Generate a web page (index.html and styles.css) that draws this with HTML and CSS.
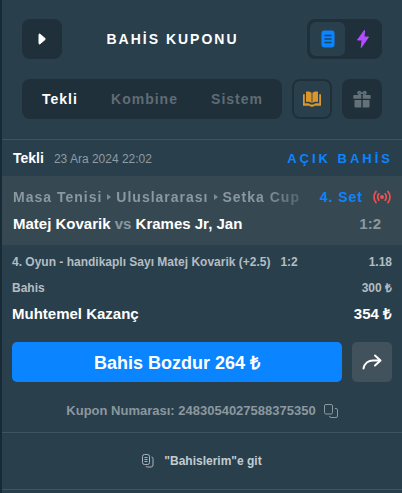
FILE: index.html
```html
<!DOCTYPE html>
<html lang="tr">
<head>
    <meta charset="UTF-8">
    <meta name="viewport" content="width=device-width, initial-scale=1.0">
    <title>Bahis Kuponu</title>
    <link rel="stylesheet" href="styles.css">
</head>
<body>
    <div class="kupon">
        <div class="ust">
            <div class="baslik">
                <button class="kare" type="button" aria-label="Kapat">
                    <svg width="8" height="12" viewBox="0 0 8 12"><path d="M1 1.600v8.800c0 .6.5.8 1 .4l5-4.200c.4-.3.4-.9 0-1.200L2 1.200C1.500.8 1 1 1 1.600z" fill="#fff" stroke="#fff"/></svg>
                </button>
                <h1>BAHİS KUPONU</h1>
                <div class="gecis">
                    <button class="secili" type="button" aria-label="Kupon">
                        <svg width="14" height="18" viewBox="0 0 14 18"><rect x=".5" y=".5" width="13" height="17" rx="3" fill="#0a84ff"/><path d="M4 5.500h6M4 9h6M4 12.500h6" stroke="#20435f" stroke-width="1.500" stroke-linecap="round"/></svg>
                    </button>
                    <button type="button" aria-label="Hızlı bahis">
                        <svg width="14" height="20" viewBox="0 0 14 20"><path d="M8.500 1.300L1.500 11h4.600L5.200 18.500 12.500 8H8z" fill="#b34dff" stroke="#b34dff" stroke-linejoin="round"/></svg>
                    </button>
                </div>
            </div>
            <div class="menu">
                <div class="sekmeler">
                    <button class="aktif" type="button">Tekli</button>
                    <button type="button">Kombine</button>
                    <button type="button">Sistem</button>
                </div>
                <button class="kare cerceve" type="button" aria-label="Kitap">
                    <svg width="18" height="16" viewBox="0 0 18 16"><path d="M3 .8c2.300-.5 4.200 0 5.600 1.200v10.200C7.200 11 5.300 10.600 3 11zM15 .8c-2.300-.5-4.200 0-5.600 1.200v10.200c1.400-1.200 3.300-1.600 5.600-1.200zM0 3.200h1.800v9.200c2.600-.5 4.500 0 6 1h2.400c1.500-1 3.400-1.500 6-1V3.200H18V14.800h-6.500c-.5.700-1.200 1-2.500 1s-2-.3-2.500-1H0z" fill="#d9962c"/></svg>
                </button>
                <button class="kare" type="button" aria-label="Hediye">
                    <svg width="18" height="18" viewBox="0 0 18 18"><path d="M1.200 5H8.300V8.800H.3V6Q.3 5 1.200 5zM9.700 5h7.100q.9 0 .9 1v2.800h-8zM1.500 10h6.800v7.500H2.500q-1 0-1-1zM9.700 10h6.800v6.500q0 1-1 1H9.700z" fill="#647179"/><path d="M7.800 4.600C6 4.600 4.800 3.600 5.200 2M10.200 4.600C12 4.600 13.200 3.600 12.800 2M5.200 2C6.500 1 8 2.200 8.400 4M12.800 2C11.500 1 10 2.200 9.600 4" fill="none" stroke="#647179" stroke-width="1.800"/></svg>
                </button>
            </div>
        </div>

        <div class="bilgi">
            <span><strong>Tekli</strong><time>23 Ara 2024 22:02</time></span>
            <span class="durum">AÇIK BAHİS</span>
        </div>

        <div class="mac">
            <div class="lig">
                <div class="yol">
                    <span>Masa Tenisi</span>
                    <svg width="4" height="6" viewBox="0 0 4 6"><path d="M0 0l4 3-4 3z" fill="#7d8b94"/></svg>
                    <span>Uluslararası</span>
                    <svg width="4" height="6" viewBox="0 0 4 6"><path d="M0 0l4 3-4 3z" fill="#7d8b94"/></svg>
                    <span>Setka Cup</span>
                </div>
                <span class="set">4. Set</span>
                <svg width="18" height="14" viewBox="0 0 18 14" fill="none" stroke="#f0504f" stroke-width="1.700" stroke-linecap="round"><circle cx="9" cy="7" r="2" fill="#f0504f" stroke="none"/><path d="M5.800 3.800Q3.600 7 5.800 10.200M12.200 3.800Q14.400 7 12.200 10.200M3 1.500Q-1 7 3 12.500M15 1.500Q19 7 15 12.500"/></svg>
            </div>
            <div class="takimlar">
                <span>Matej Kovarik <em>vs</em> Krames Jr, Jan</span>
                <span class="skor">1:2</span>
            </div>
        </div>

        <div class="detay">
            <div class="satir">
                <span>4. Oyun - handikaplı Sayı Matej Kovarik (+2.5)<span class="ara">1:2</span></span>
                <span>1.18</span>
            </div>
            <div class="satir">
                <span>Bahis</span>
                <span>300 ₺</span>
            </div>
            <div class="satir kazanc">
                <span>Muhtemel Kazanç</span>
                <span>354 ₺</span>
            </div>
            <div class="islem">
                <button class="bozdur" type="button">Bahis Bozdur 264 ₺</button>
                <button class="paylas" type="button" aria-label="Paylaş">
                    <svg width="20" height="16" viewBox="0 0 20 16" fill="none" stroke="#fff" stroke-width="2" stroke-linecap="round" stroke-linejoin="round"><path d="M1.500 14.500C2.500 9.500 6.500 6.500 11 6.500h7M13 1.500l5.500 5-5.500 5"/></svg>
                </button>
            </div>
            <div class="numara">
                <span>Kupon Numarası: 2483054027588375350</span>
                <button type="button" aria-label="Kopyala">
                    <svg width="14" height="14" viewBox="0 0 14 14" fill="none" stroke="#8b989f"><rect x=".5" y=".5" width="8" height="9.500" rx="1.500"/><path d="M10.800 4.500h1.200q1.500 0 1.500 1.500v6q0 1.500-1.500 1.500H7q-1.500 0-1.500-1.500"/></svg>
                </button>
            </div>
        </div>

        <div class="alt">
            <a href="#">
                <svg width="12" height="14" viewBox="0 0 12 14" fill="none" stroke="#aab4ba"><rect x=".5" y=".5" width="7" height="10" rx="2"/><path d="M2.500 3.500h3M2.500 5.500h3M2.500 7.500h3M9.500 3q1.500 0 1.500 1.500V11q0 2-2 2H5.500q-1.500 0-1.500-1"/></svg>
                <span>"Bahislerim"e git</span>
            </a>
        </div>
    </div>
</body>
</html>
```
FILE: styles.css
```css
* {
    box-sizing: border-box;
    font-family: "Liberation Sans", Arial, sans-serif;
}

body {
    margin: 0;
    background-color: #2a3f4c;
}

button {
    border: none;
    padding: 0;
    background: none;
    cursor: pointer;
}

svg {
    display: block;
    flex-shrink: 0;
}

.kupon {
    min-height: 100vh;
    border-left: 2px solid #182a35;
    color: #fff;
    font-weight: bold;
}

.ust {
    padding: 19px 20px 20px;
    border-bottom: 1px solid #40545f;
}

.baslik {
    display: flex;
    align-items: center;
    margin-bottom: 20px;
}

.baslik h1 {
    flex: 1;
    margin: 0;
    padding-right: 24px;
    font-size: 14px;
    letter-spacing: 2px;
    text-align: center;
}

.kare {
    width: 40px;
    height: 40px;
    border-radius: 8px;
    background-color: #1f303a;
    display: flex;
    justify-content: center;
    align-items: center;
}

.cerceve {
    border: 2px solid #1f303a;
    background-color: #2a3f4c;
}

.gecis {
    display: flex;
    height: 40px;
    padding: 3px 2px 3px 3px;
    border-radius: 8px;
    background-color: #1f303a;
}

.gecis button {
    width: 35px;
    border-radius: 6px;
    display: flex;
    justify-content: center;
    align-items: center;
}

.gecis .secili {
    background-color: #2a3f4c;
}

.menu {
    display: flex;
    gap: 10px;
}

.sekmeler {
    flex: 1;
    height: 40px;
    padding: 0 19px 0 20px;
    border-radius: 8px;
    background-color: #1f303a;
    display: flex;
    justify-content: space-between;
    align-items: center;
}

.sekmeler button {
    color: #5f6c74;
    font-size: 14px;
    font-weight: bold;
    letter-spacing: 1px;
}

.sekmeler .aktif {
    color: #fff;
}

.bilgi {
    height: 36px;
    padding: 0 9px 0 11px;
    display: flex;
    justify-content: space-between;
    align-items: center;
    font-size: 14px;
}

.bilgi time {
    margin-left: 10px;
    color: #8e9ba3;
    font-size: 12px;
    font-weight: normal;
}

.durum {
    color: #0a84ff;
    font-size: 13px;
    letter-spacing: 3px;
}

.mac {
    padding: 12px 11px;
    background-color: #364953;
}

.lig {
    display: flex;
    align-items: center;
    margin-bottom: 9px;
    font-size: 14px;
    line-height: 18px;
    letter-spacing: 1px;
}

.yol {
    flex: 1;
    min-width: 0;
    display: flex;
    align-items: center;
    gap: 5px;
    overflow: hidden;
    white-space: nowrap;
    color: #8b989f;
    -webkit-mask-image: linear-gradient(to left, rgba(0, 0, 0, 0.2), #000 50px);
    mask-image: linear-gradient(to left, rgba(0, 0, 0, 0.2), #000 50px);
}

.set {
    margin: 0 10px;
    color: #0a84ff;
}

.takimlar {
    display: flex;
    justify-content: space-between;
    font-size: 15px;
    line-height: 18px;
}

.takimlar em {
    color: #8b989f;
    font-style: normal;
}

.skor {
    padding-right: 10px;
    color: #8b989f;
}

.detay {
    padding: 4px 10px 11px;
    border-bottom: 1px solid #40545f;
}

.satir {
    display: flex;
    justify-content: space-between;
    color: #b4bdc3;
    font-size: 12px;
    line-height: 26px;
}

.ara {
    margin-left: 10px;
}

.kazanc {
    color: #fff;
    font-size: 15px;
}

.islem {
    display: flex;
    gap: 10px;
    margin: 15px 0 19px;
}

.bozdur {
    flex: 1;
    height: 40px;
    border-radius: 5px;
    background-color: #0a84ff;
    color: #fff;
    font-size: 18px;
    font-weight: bold;
}

.paylas {
    width: 40px;
    height: 40px;
    border-radius: 5px;
    background-color: #42525d;
    display: flex;
    justify-content: center;
    align-items: center;
}

.numara {
    display: flex;
    justify-content: center;
    align-items: center;
    gap: 8px;
    color: #8b989f;
    font-size: 13px;
    line-height: 20px;
}

.alt {
    border-bottom: 1px solid #40545f;
}

.alt a {
    height: 56px;
    display: flex;
    justify-content: center;
    align-items: center;
    gap: 10px;
    color: #c4ccd1;
    font-size: 12px;
    text-decoration: none;
}
```
